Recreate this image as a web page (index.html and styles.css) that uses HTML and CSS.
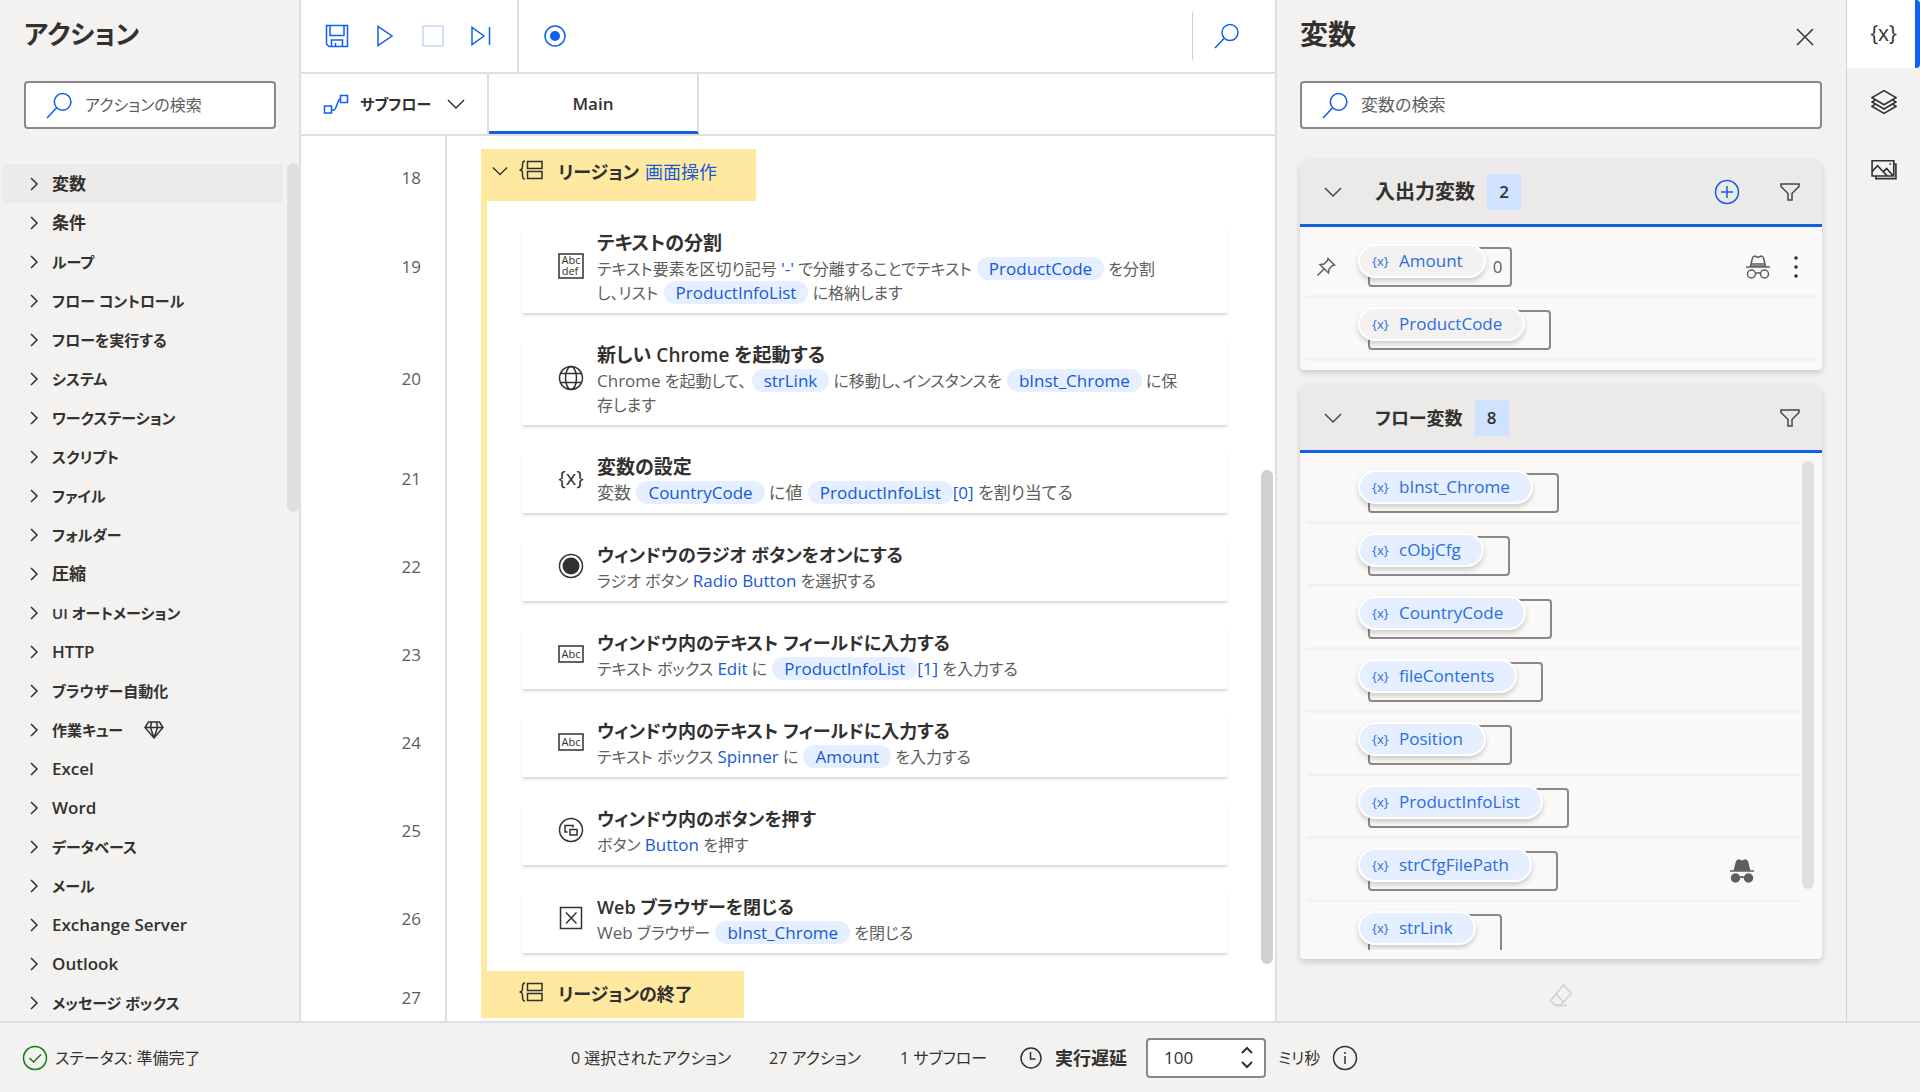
FILE: index.html
```html
<!DOCTYPE html>
<html lang="ja">
<head>
<meta charset="utf-8">
<title>フロー デザイナー</title>
<link rel="stylesheet" href="styles.css">
</head>
<body>
<svg class="sprite" aria-hidden="true">
  <symbol id="search" viewBox="0 0 26 26"><circle cx="16" cy="9.500" r="8"/><path d="M10.500 15 1 25"/></symbol>
  <symbol id="right" viewBox="0 0 10 14"><path d="m2 1 6 6-6 6"/></symbol>
  <symbol id="down" viewBox="0 0 18 12"><path d="m1 2 8 8 8-8"/></symbol>
  <symbol id="region" viewBox="0 0 26 20"><path d="M7 1C4.500 1 4.500 2.500 4.500 4.500v2C4.500 9 3.500 10 1.500 10c2 0 3 1 3 3.500v2c0 2 0 3.500 2.500 3.500M9.500 1.500H24v7H9.500zM9.500 11.500H24v7H9.500z"/></symbol>
  <symbol id="filter" viewBox="0 0 20 18"><path d="M1 1h18v2.500L12 10.500V17H8v-6.500L1 3.500z"/></symbol>
  <symbol id="spy" viewBox="0 0 24 24"><path class="hat" d="M4.500 11 6.500 3Q7 1 9 1l3 1.500L15 1q2 0 2.500 2l2 8z"/><path d="M0 12h24M5 9h14M9.500 18.500Q12 17 14.500 18.500"/><circle class="hat" cx="5.500" cy="19" r="4"/><circle class="hat" cx="18.500" cy="19" r="4"/></symbol>
</svg>

<div class="app">
  <div class="workspace">
    <aside class="actions">
      <h1 class="kana">アクション</h1>
      <label class="search"><svg><use href="#search"/></svg><input class="kana" type="text" placeholder="アクションの検索" aria-label="アクションの検索"></label>
      <div class="tree-area">
        <ul class="tree">
          <li><button class="selected"><svg><use href="#right"/></svg>変数</button></li>
          <li><button><svg><use href="#right"/></svg>条件</button></li>
          <li><button class="kana"><svg><use href="#right"/></svg>ループ</button></li>
          <li><button class="kana"><svg><use href="#right"/></svg>フロー コントロール</button></li>
          <li><button class="kana"><svg><use href="#right"/></svg>フローを実行する</button></li>
          <li><button class="kana"><svg><use href="#right"/></svg>システム</button></li>
          <li><button class="kana"><svg><use href="#right"/></svg>ワークステーション</button></li>
          <li><button class="kana"><svg><use href="#right"/></svg>スクリプト</button></li>
          <li><button class="kana"><svg><use href="#right"/></svg>ファイル</button></li>
          <li><button class="kana"><svg><use href="#right"/></svg>フォルダー</button></li>
          <li><button><svg><use href="#right"/></svg>圧縮</button></li>
          <li><button class="kana"><svg><use href="#right"/></svg>UI オートメーション</button></li>
          <li><button><svg><use href="#right"/></svg>HTTP</button></li>
          <li><button class="kana"><svg><use href="#right"/></svg>ブラウザー自動化</button></li>
          <li><button class="kana"><svg><use href="#right"/></svg>作業キュー<svg class="gem" viewBox="0 0 20 18"><path d="M4.500 1h11L19 6.500 10 17 1 6.500zM1 6.500h18M7.500 1 6.500 6.500 10 17l3.500-10.500L12.500 1"/></svg></button></li>
          <li><button><svg><use href="#right"/></svg>Excel</button></li>
          <li><button><svg><use href="#right"/></svg>Word</button></li>
          <li><button class="kana"><svg><use href="#right"/></svg>データベース</button></li>
          <li><button class="kana"><svg><use href="#right"/></svg>メール</button></li>
          <li><button><svg><use href="#right"/></svg>Exchange Server</button></li>
          <li><button><svg><use href="#right"/></svg>Outlook</button></li>
          <li><button class="kana"><svg><use href="#right"/></svg>メッセージ ボックス</button></li>
        </ul>
        <div class="track"><div class="thumb tree-thumb"></div></div>
      </div>
    </aside>

    <main class="designer">
      <div class="toolbar">
        <div class="run-tools">
          <button aria-label="保存"><svg viewBox="0 0 24 24"><path d="M1.500 1.500h21v21H4l-2.500-2.500zM5 1.500v10h14v-10M6.500 22.500V16h11v6.500M10.500 22.500v-3.500"/></svg></button>
          <button aria-label="実行"><svg viewBox="0 0 24 24"><path d="M5 2.500v19L19 12z"/></svg></button>
          <button aria-label="停止" disabled><svg viewBox="0 0 24 24"><path d="M2 2h20v20H2z"/></svg></button>
          <button aria-label="次のアクションを実行"><svg viewBox="0 0 24 24"><path d="M3 3.500v17L15 12zM20.500 3v18"/></svg></button>
        </div>
        <button class="record" aria-label="レコーダー"><svg viewBox="0 0 24 24"><circle cx="12" cy="12" r="10"/><circle class="solid" cx="12" cy="12" r="5"/></svg></button>
        <div class="find"><button aria-label="検索"><svg><use href="#search"/></svg></button></div>
      </div>
      <div class="tabs">
        <button class="subflow"><svg class="flow" viewBox="0 0 26 20"><path d="M1.500 12h7v7h-7zM17.500 1.500h7v7h-7zM8.500 16h2c1 0 1.500-.500 2-1.500l3-8c.500-1 1-1.500 2-1.500"/></svg><span>サブフロー</span><svg class="chev"><use href="#down"/></svg></button>
        <button class="tab">Main</button>
      </div>
      <div class="canvas">
        <div class="steps">
          <div class="row lead"><span class="num"></span></div>
          <div class="row"><span class="num flat">18</span><div class="region start"><svg class="chev"><use href="#down"/></svg><svg class="brace"><use href="#region"/></svg><b>リージョン</b><a href="#">画面操作</a></div></div>
          <div class="row"><span class="num">19</span><div class="body"><article class="card">
            <svg class="icon" viewBox="0 0 26 26"><path d="M1 1h24v24H1z"/><text x="13" y="11" text-anchor="middle" font-size="11">Abc</text><text x="12" y="22" text-anchor="middle" font-size="11">def</text></svg>
            <div><h3>テキストの分割</h3><p class="kana">テキスト要素を区切り記号 <a href="#">'-'</a> で分離することでテキスト <a class="chip" href="#">ProductCode</a> を分割<br>し、リスト <a class="chip" href="#">ProductInfoList</a> に格納します</p></div></article></div></div>
          <div class="row"><span class="num">20</span><div class="body"><article class="card">
            <svg class="icon" viewBox="0 0 26 26"><circle cx="13" cy="13" r="11.500"/><ellipse cx="13" cy="13" rx="5.500" ry="11.500"/><path d="M3 8.500h20M3 17.500h20"/></svg>
            <div><h3>新しい Chrome を起動する</h3><p class="kana"><span>Chrome</span> を起動して、 <a class="chip" href="#">strLink</a> に移動し、インスタンスを <a class="chip" href="#">bInst_Chrome</a> に保<br>存します</p></div></article></div></div>
          <div class="row"><span class="num">21</span><div class="body"><article class="card">
            <span class="icon var-icon">{x}</span>
            <div><h3>変数の設定</h3><p>変数 <a class="chip" href="#">CountryCode</a> に値 <a class="chip" href="#">ProductInfoList</a><a href="#">[0]</a> を割り当てる</p></div></article></div></div>
          <div class="row"><span class="num">22</span><div class="body"><article class="card">
            <svg class="icon" viewBox="0 0 26 26"><circle cx="13" cy="13" r="11.500"/><circle class="solid" cx="13" cy="13" r="8.500"/></svg>
            <div><h3 class="kana">ウィンドウのラジオ ボタンをオンにする</h3><p class="kana">ラジオ ボタン <a href="#">Radio Button</a> を選択する</p></div></article></div></div>
          <div class="row"><span class="num">23</span><div class="body"><article class="card">
            <svg class="icon" viewBox="0 0 26 26"><path d="M1 5h24v16H1z"/><text x="13" y="17" text-anchor="middle" font-size="11">Abc</text></svg>
            <div><h3 class="kana">ウィンドウ内のテキスト フィールドに入力する</h3><p class="kana">テキスト ボックス <a href="#">Edit</a> に <a class="chip" href="#">ProductInfoList</a><a href="#">[1]</a> を入力する</p></div></article></div></div>
          <div class="row"><span class="num">24</span><div class="body"><article class="card">
            <svg class="icon" viewBox="0 0 26 26"><path d="M1 5h24v16H1z"/><text x="13" y="17" text-anchor="middle" font-size="11">Abc</text></svg>
            <div><h3 class="kana">ウィンドウ内のテキスト フィールドに入力する</h3><p class="kana">テキスト ボックス <a href="#">Spinner</a> に <a class="chip" href="#">Amount</a> を入力する</p></div></article></div></div>
          <div class="row"><span class="num">25</span><div class="body"><article class="card">
            <svg class="icon" viewBox="0 0 26 26"><circle cx="13" cy="13" r="11.500"/><path d="M12 12.500h7V18h-7zM9.500 15H7V8.500h8v2"/></svg>
            <div><h3 class="kana">ウィンドウ内のボタンを押す</h3><p class="kana">ボタン <a href="#">Button</a> を押す</p></div></article></div></div>
          <div class="row"><span class="num">26</span><div class="body"><article class="card">
            <svg class="icon" viewBox="0 0 26 26"><path d="M2.500 2.500h21v21h-21zM8 7.500l10.500 11M18.500 7.500 8 18.500"/></svg>
            <div><h3 class="kana">Web ブラウザーを閉じる</h3><p class="kana"><span>Web</span> ブラウザー <a class="chip" href="#">bInst_Chrome</a> を閉じる</p></div></article></div></div>
          <div class="row gap"><span class="num"></span><div class="body"></div></div>
          <div class="row"><span class="num flat">27</span><div class="region end"><svg class="brace"><use href="#region"/></svg><b>リージョンの終了</b></div></div>
          <div class="row rest"><span class="num"></span></div>
        </div>
        <div class="track"><div class="thumb canvas-thumb"></div></div>
      </div>
    </main>

    <aside class="variables">
      <header><h1>変数</h1><button aria-label="閉じる"><svg viewBox="0 0 18 18"><path d="m1 1 16 16M17 1 1 17"/></svg></button></header>
      <label class="search"><svg><use href="#search"/></svg><input type="text" placeholder="変数の検索" aria-label="変数の検索"></label>
      <section class="group io">
        <div class="group-head"><svg class="chev"><use href="#down"/></svg><h2>入出力変数</h2><span class="count">2</span>
          <button class="add" aria-label="追加"><svg viewBox="0 0 26 26"><circle cx="13" cy="13" r="11.500"/><path d="M13 7v12M7 13h12"/></svg></button>
          <button aria-label="フィルター"><svg class="filter"><use href="#filter"/></svg></button></div>
        <ul class="vars">
          <li><svg class="pin" viewBox="0 0 20 20"><path d="m12 1.500 6.500 6.500-2 .500-3.500 3.500-.500 4-8.500-8.500 4-.500L11.500 3.500zM8 12l-6.500 6.500"/></svg><div class="slot"><a class="pill" href="#"><i>{x}</i>Amount</a><span class="value">0</span></div><svg class="spy"><use href="#spy"/></svg><button class="more" aria-label="その他"><svg viewBox="0 0 6 26"><circle cx="3" cy="4" r="1.800"/><circle cx="3" cy="13" r="1.800"/><circle cx="3" cy="22" r="1.800"/></svg></button></li>
          <li><div class="slot"><a class="pill" href="#"><i>{x}</i>ProductCode</a><span class="value"></span></div></li>
        </ul>
      </section>
      <section class="group flow-vars">
        <div class="group-head"><svg class="chev"><use href="#down"/></svg><h2 class="kana">フロー変数</h2><span class="count">8</span>
          <button class="add" aria-label="フィルター"><svg class="filter"><use href="#filter"/></svg></button></div>
        <div class="var-area">
          <ul class="vars">
            <li><div class="slot"><a class="pill" href="#"><i>{x}</i>bInst_Chrome</a><span class="value"></span></div></li>
            <li><div class="slot"><a class="pill" href="#"><i>{x}</i>cObjCfg</a><span class="value"></span></div></li>
            <li><div class="slot"><a class="pill" href="#"><i>{x}</i>CountryCode</a><span class="value"></span></div></li>
            <li><div class="slot"><a class="pill" href="#"><i>{x}</i>fileContents</a><span class="value"></span></div></li>
            <li><div class="slot"><a class="pill" href="#"><i>{x}</i>Position</a><span class="value"></span></div></li>
            <li><div class="slot"><a class="pill" href="#"><i>{x}</i>ProductInfoList</a><span class="value"></span></div></li>
            <li><div class="slot"><a class="pill" href="#"><i>{x}</i>strCfgFilePath</a><span class="value"></span></div><svg class="spy on"><use href="#spy"/></svg></li>
            <li><div class="slot"><a class="pill" href="#"><i>{x}</i>strLink</a><span class="value"></span></div></li>
          </ul>
          <div class="track"><div class="thumb vars-thumb"></div></div>
        </div>
      </section>
      <div class="clear"><button aria-label="クリア" disabled><svg viewBox="0 0 24 24"><path d="M14.500 2 22.500 10.500 11.500 22H5.500l-4-4.500zM6.500 10.500l8 8.500M5.500 22.500H18"/></svg></button></div>
    </aside>

    <nav class="rail">
      <button class="active" aria-label="変数"><span class="var-icon">{x}</span></button>
      <button aria-label="UI 要素"><svg viewBox="0 0 24 24"><path d="M12 1.500 23 8l-11 6.500L1 8zM4 10l-3 2 11 6.500L23 12l-3-2M4 14l-3 2 11 6.500L23 16l-3-2"/></svg></button>
      <button aria-label="画像"><svg viewBox="0 0 24 24"><path d="M1 3.500h20v14H1zM4.500 17.500V20H23V6.500h-2M1 13.500l5-5.500 9 9.500M11.500 13.500l3-3 6 7M17 6.500h1.500"/></svg></button>
    </nav>
  </div>

  <footer class="status">
    <span class="state"><svg class="ok" viewBox="0 0 26 26"><circle cx="13" cy="13" r="11.500"/><path d="m7.500 13 4 4 7.500-7.500"/></svg>ステータス: 準備完了</span>
    <span>0 選択されたアクション</span>
    <span>27 アクション</span>
    <span>1 サブフロー</span>
    <div class="delay">
      <svg viewBox="0 0 22 22"><circle cx="11" cy="11" r="10"/><path d="M10.500 5v7h5"/></svg>
      <label for="delay">実行遅延</label>
      <div class="stepper"><input id="delay" type="text" inputmode="numeric" value="100"><div><button aria-label="増やす"><svg viewBox="0 0 12 8"><path d="m1 7 5-5 5 5"/></svg></button><button aria-label="減らす"><svg viewBox="0 0 12 8"><path d="m1 1 5 5 5-5"/></svg></button></div></div>
      <span>ミリ秒</span>
      <svg class="info" viewBox="0 0 26 26"><circle cx="13" cy="13" r="11.500"/><path d="M13 11v8M13 7v2"/></svg>
    </div>
  </footer>
</div>
</body>
</html>
```
FILE: styles.css
```css
* { box-sizing: border-box; }
body {
  margin: 0;
  font-family: "Open Sans", "Noto Sans CJK JP", sans-serif;
  font-feature-settings: "palt";
  font-size: 17px;
  line-height: 24px;
  color: #323130;
  white-space: nowrap;
}
h1, h2, h3, p, ul { margin: 0; padding: 0; }
ul { list-style: none; }
button, input { font: inherit; font-feature-settings: inherit; color: inherit; border: 0; background: none; padding: 0; margin: 0; }
a { color: #1459d9; text-decoration: none; }
svg { display: block; flex: none; fill: none; stroke: currentColor; stroke-width: 1.5px; }
svg text { fill: currentColor; stroke: none; }
.solid { fill: currentColor; stroke: none; }
.sprite { position: absolute; width: 0; height: 0; }

.app { height: 100vh; display: flex; flex-direction: column; overflow: hidden; background: #f3f2f1; }
.workspace { flex: 1; min-height: 0; display: flex; border-bottom: 2px solid #e1dfdd; }
.chev { width: 18px; height: 12px; }
.track { flex: none; width: 12px; }
.thumb { border-radius: 6px; background: #e1dfdd; }

h1 { font-size: 28px; line-height: 40px; font-weight: 700; }
h1.kana { font-size: 26px; }
.search { display: flex; align-items: center; gap: 12px; height: 48px; padding-left: 20px; border: 2px solid #8a8886; border-radius: 4px; background: #fff; }
.search svg { width: 27px; height: 27px; color: #1459f0; }
.search input { flex: 1; min-width: 0; outline: 0; }
.search input.kana { font-size: 16px; }
.search input::placeholder { color: #605e5c; opacity: 1; }

.actions { flex: none; width: 301px; display: flex; flex-direction: column; padding-top: 14px; border-right: 2px solid #e1dfdd; }
.actions h1 { padding-left: 24px; }
.actions .search { margin: 27px 23px 34px 24px; }
.tree-area { flex: 1; min-height: 0; display: flex; justify-content: space-between; }
.tree { width: 283px; padding-left: 2px; overflow: hidden; padding-top: 1px; }
.tree button { display: flex; align-items: center; width: 100%; height: 39px; gap: 13px; padding-left: 27px; font-weight: 600; border-radius: 3px; }
.tree .kana { font-size: 15px; }
.tree svg { width: 10px; height: 14px; }
.tree .gem { width: 20px; height: 18px; margin-left: 8px; }
.tree .selected { background: #edebe9; }
.tree-thumb { height: 349px; }

.designer { flex: 1; min-width: 0; display: flex; flex-direction: column; background: #fff; }
.toolbar { display: flex; height: 74px; border-bottom: 2px solid #e1dfdd; color: #0f5ff2; align-items: center; }
.toolbar svg { width: 24px; height: 24px; }
.run-tools { display: flex; align-items: center; align-self: stretch; width: 218px; padding-left: 24px; gap: 24px; border-right: 2px solid #e1dfdd; }
.run-tools button:disabled { color: #c3d7f7; }
.record { margin-left: 24px; }
.find { margin-left: auto; display: flex; align-items: center; height: 48px; padding: 0 35px 0 21px; border-left: 1px solid #d2d0ce; }
.find svg { width: 26px; height: 26px; }
.tabs { display: flex; height: 62px; border-bottom: 2px solid #e1dfdd; }
.subflow { display: flex; align-items: center; width: 188px; padding: 0 22px; font-size: 15px; font-weight: 600; border-right: 2px solid #e1dfdd; }
.subflow span { margin: 0 auto 0 11px; }
.flow { width: 26px; height: 20px; color: #0f5ff2; }
.tab { width: 210px; padding-top: 3px; font-weight: 600; border-right: 2px solid #e1dfdd; border-bottom: 3px solid #1160e0; }

.canvas { flex: 1; min-height: 0; display: flex; padding-right: 2px; }
.steps { flex: 1; min-width: 0; display: flex; flex-direction: column; overflow: hidden; }
.row { display: flex; }
.num { flex: none; display: flex; align-items: center; justify-content: flex-end; width: 146px; padding-right: 24px; padding-top: 20px; border-right: 2px solid #e1dfdd; color: #605e5c; }
.flat { padding-top: 6px; }
.lead { height: 13px; }
.lead .num, .gap .num { padding: 0; }
.body { flex: 1; min-width: 0; margin-left: 34px; padding: 24px 33px 0 34px; border-left: 6px solid #ffe9a1; }
.gap { height: 18px; }
.gap .body { padding: 0; }
.rest { flex: 1; min-height: 0; }
.rest .num { padding: 0; }
.region { display: flex; align-items: flex-start; margin-left: 34px; background: #ffe9a1; font-size: 18px; }
.region b { margin-left: 14px; font-weight: 600; }
.region a { margin-left: 6px; }
.region .brace { width: 26px; height: 20px; }
.start { width: 275px; height: 52px; padding: 11px 0 0 11px; }
.start .chev { width: 16px; margin: 5px 10px 0 0; }
.end { width: 263px; height: 47px; padding: 11px 0 0 37px; }
.card { display: flex; gap: 13px; padding: 6px 0 8px 37px; border-radius: 3px; background: #fff; box-shadow: 0 3px 3px -1px rgba(0, 0, 0, .16); }
.icon { align-self: center; flex: none; width: 26px; height: 26px; margin-bottom: 4px; }
.card h3 { font-size: 19px; line-height: 24px; font-weight: 600; padding-bottom: 2px; }
.card h3.kana { font-size: 18px; }
.card p { color: #605e5c; }
.card p.kana { font-size: 16px; }
.card p a, .card p span { font-size: 17px; }
.chip { display: inline-block; height: 23px; line-height: 23px; margin-left: 1px; padding: 0 12px; border-radius: 12px; background: #e5efff; vertical-align: top; }
.var-icon { font-size: 20px; line-height: 26px; text-align: center; }
.canvas-thumb { height: 494px; margin-top: 334px; background: #d2d0ce; }

.variables { flex: none; width: 572px; display: flex; flex-direction: column; padding: 14px 24px 0 23px; border-left: 2px solid #e1dfdd; border-right: 1px solid #d2d0ce; }
.variables header { display: flex; justify-content: space-between; padding-right: 8px; }
.variables header svg { width: 18px; height: 18px; margin-top: 6px; }
.variables .search { margin: 27px 0 30px; }
.group { border-radius: 8px 8px 4px 4px; background: #faf9f8; box-shadow: 0 3px 6px rgba(0, 0, 0, .16); }
.group-head { display: flex; align-items: center; height: 68px; padding: 0 22px 0 24px; border-radius: 8px 8px 0 0; background: #ebeae9; border-bottom: 3px solid #1160e0; color: #484644; }
.group-head h2 { margin: 0 12px 0 33px; font-size: 20px; line-height: 32px; font-weight: 600; color: #323130; }
.group-head h2.kana { font-size: 18px; }
.count { width: 34px; line-height: 36px; text-align: center; font-weight: 600; background: #cfe2ff; color: #323130; }
.add { margin-left: auto; }
.add svg { width: 26px; height: 26px; color: #1160e0; }
.group-head .filter { width: 20px; height: 18px; color: #484644; }
.add + button { margin-left: 40px; }
.io { margin-bottom: 15px; }
.io .vars { padding: 8px 6px 9px; }
.io .pill { background: #f3f2f1; }
.vars li { display: flex; align-items: center; height: 63px; padding: 3px 17px 0 62px; border-bottom: 3px solid #f3f2f1; }
.pin { width: 20px; height: 20px; margin: 0 32px 0 -52px; color: #605e5c; }
.slot { display: flex; height: 40px; border: 2px solid #8a8886; border-radius: 4px; }
.pill { display: flex; align-items: center; height: 34px; margin: -5px 0 0 -12px; padding: 0 21px 0 12px; border: 2px solid #fff; border-radius: 17px; background: #e5efff; box-shadow: 0 3px 5px rgba(0, 0, 0, .18); color: #2a6ee0; }
.pill i { width: 16px; margin-right: 11px; font-size: 13px; font-style: normal; text-align: center; }
.value { width: 24px; line-height: 36px; text-align: center; color: #605e5c; }
.spy { width: 24px; height: 24px; margin-left: auto; color: #605e5c; }
.on { fill: #605e5c; }
.more { margin-left: 23px; }
.more svg { width: 6px; height: 26px; fill: currentColor; stroke: none; }
.flow-vars { flex: 1; min-height: 0; display: flex; flex-direction: column; }
.flow-vars .group-head { flex: none; }
.var-area { flex: 1; min-height: 0; display: flex; gap: 2px; margin: 8px 8px 9px 6px; overflow: hidden; }
.var-area .vars { flex: 1; }
.var-area .vars li { padding-right: 46px; }
.vars-thumb { height: 428px; }
.clear { display: flex; justify-content: center; align-items: center; height: 62px; padding-top: 10px; color: #d2d0ce; }
.clear svg { width: 24px; height: 24px; }

.rail { flex: none; width: 73px; }
.rail button { display: flex; align-items: center; justify-content: center; width: 100%; height: 68px; }
.rail svg { width: 26px; height: 26px; }
.rail .var-icon { font-size: 21px; }
.rail .active { background: #fff; border-right: 5px solid #0f5ff2; padding: 0 0 2px 5px; border-radius: 0 4px 4px 0; }

.status { flex: none; height: 69px; display: grid; grid-template-columns: 549px 198px 131px 120px auto; align-items: center; padding-left: 22px; font-size: 16px; }
.state, .delay { display: flex; align-items: center; }
.state svg { width: 26px; height: 26px; margin-right: 7px; color: #107c10; }
.delay svg { width: 22px; height: 22px; }
.delay label { margin: 0 19px 0 13px; font-size: 18px; font-weight: 600; }
.stepper { display: flex; width: 120px; height: 40px; margin-right: 12px; border: 2px solid #8a8886; border-radius: 4px; background: #fff; font-size: 17px; }
.stepper input { width: 84px; padding-left: 16px; outline: 0; }
.stepper div { display: flex; flex-direction: column; justify-content: space-evenly; padding-left: 9px; }
.stepper button svg { width: 12px; height: 8px; stroke-width: 2px; }
.delay .info { width: 26px; height: 26px; margin-left: 12px; }
```
